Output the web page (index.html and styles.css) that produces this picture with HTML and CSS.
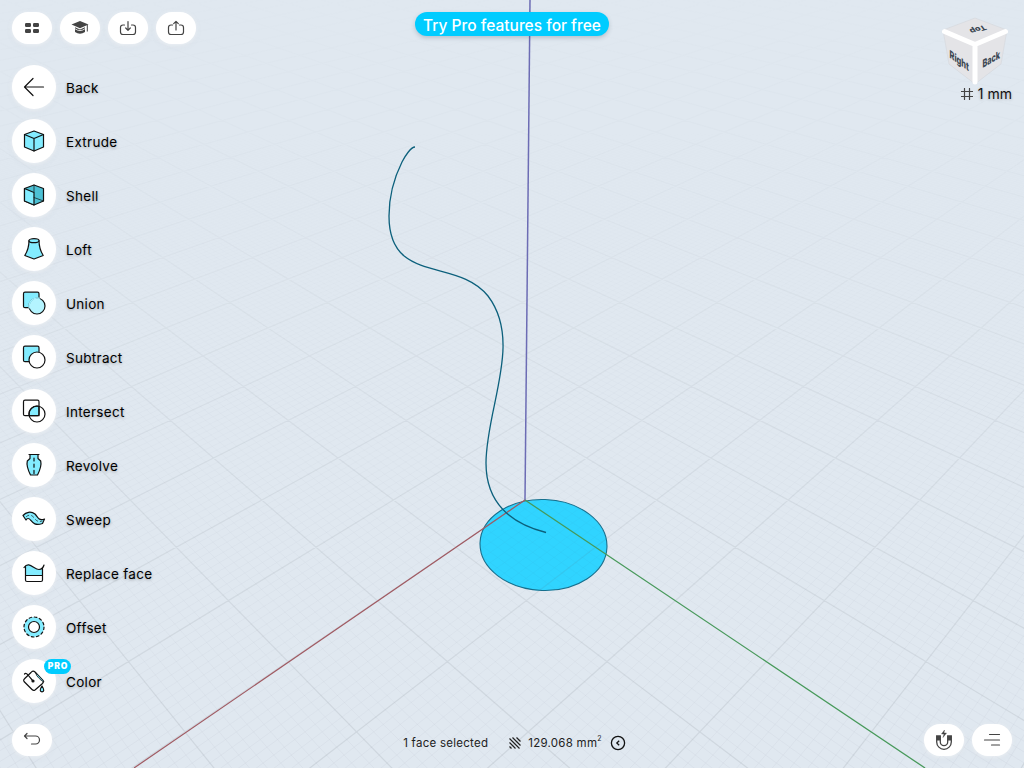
FILE: index.html
```html
<!DOCTYPE html>
<html lang="en">
<head>
  <meta charset="utf-8">
  <title>Sketch</title>
  <link rel="stylesheet" href="styles.css">
</head>
<body>
  <div class="app">
    <!-- 3D viewport -->
    <svg class="scene" viewBox="0 0 1024 768">
      <defs>
        <linearGradient id="fadeMajor" gradientUnits="userSpaceOnUse" x1="0" y1="0" x2="0" y2="768">
          <stop offset="0" stop-color="#fff" stop-opacity="0.04"/>
          <stop offset="0.3" stop-color="#fff" stop-opacity="0.25"/>
          <stop offset="0.6" stop-color="#fff" stop-opacity="0.7"/>
          <stop offset="1" stop-color="#fff" stop-opacity="1"/>
        </linearGradient>
        <linearGradient id="fadeMinor" gradientUnits="userSpaceOnUse" x1="0" y1="0" x2="0" y2="768">
          <stop offset="0.15" stop-color="#fff" stop-opacity="0"/>
          <stop offset="0.5" stop-color="#fff" stop-opacity="0.45"/>
          <stop offset="1" stop-color="#fff" stop-opacity="1"/>
        </linearGradient>
        <mask id="maskMajor" maskUnits="userSpaceOnUse" x="0" y="0" width="1024" height="768"><rect width="1024" height="768" fill="url(#fadeMajor)"/></mask>
        <mask id="maskMinor" maskUnits="userSpaceOnUse" x="0" y="0" width="1024" height="768"><rect width="1024" height="768" fill="url(#fadeMinor)"/></mask>
      </defs>
      <g transform="rotate(2 543.5 545)"><ellipse class="face" cx="543.5" cy="545" rx="63.5" ry="45.5"/></g>
      <g mask="url(#maskMinor)"><path id="gridMinor" class="grid-minor"/></g>
      <g mask="url(#maskMajor)"><path id="gridMajor" class="grid-major"/></g>
      <path class="axis axis-z" d="M525 500L530 0"/>
      <path class="axis axis-x" d="M525 500L134 768"/>
      <path class="axis axis-y" d="M525 500L925 768"/>
      <path class="curve" d="M415 147C411 147 405 156 402 162C394 178 389 198 389 216C389 285 457 257 488 296C523 342 486 408 486 463C486 502 509 523 546 532.500"/>
    </svg>

    <div class="topbar">
      <div class="button-row">
        <button class="pill-btn"><svg width="20" height="20" viewBox="0 0 20 20" fill="#444"><rect x="3" y="5" width="6" height="4" rx="1.2"/><rect x="11" y="5" width="6" height="4" rx="1.2"/><rect x="3" y="11" width="6" height="4" rx="1.2"/><rect x="11" y="11" width="6" height="4" rx="1.2"/></svg></button>
        <button class="pill-btn"><svg width="20" height="20" viewBox="0 0 20 20" fill="#444"><path d="M10 3L18.500 6.500L10 10.200L1.500 6.500ZM5 9.300L10 11.500L15 9.300V14Q10 17.500 5 14Z"/><path d="M5 10.700Q10 14.500 15 10.700" fill="none" stroke="#fff" stroke-width=".8"/><path d="M17.300 7V13.500" stroke="#444"/></svg></button>
        <button class="pill-btn"><svg class="line" width="20" height="20" viewBox="0 0 20 20"><path d="M6.500 7H5Q2.500 7 2.500 9.500V14Q2.500 16.500 5 16.500H15Q17.500 16.500 17.500 14V9.500Q17.500 7 15 7H13.500M10 3.500V12M7.700 10L10 12.300L12.300 10"/></svg></button>
        <button class="pill-btn"><svg class="line" width="20" height="20" viewBox="0 0 20 20"><path d="M6.500 7H5Q2.500 7 2.500 9.500V14Q2.500 16.500 5 16.500H15Q17.500 16.500 17.500 14V9.500Q17.500 7 15 7H13.500M10 12V3.500M7.700 5.700L10 3.400L12.300 5.700"/></svg></button>
      </div>
      <button class="promo">Try Pro features for free</button>
      <div class="view">
        <svg class="cube" width="70" height="70" viewBox="940 16 70 70">
          <path d="M975 18L943 30L949 64L975 84L1001 64L1007 30Z" fill="#e4e4e7" stroke="#d3d7dc" stroke-width=".6"/>
          <path class="cube-edge" d="M944.500 31.500L975 44.500L1005.500 31.500M975 44.500V82"/>
          <text class="cube-text" transform="matrix(.88 .62 0 1.15 949.500 57.500)" textLength="22" lengthAdjust="spacingAndGlyphs">Right</text>
          <text class="cube-text" transform="matrix(.88 -.5 0 1.15 982.500 68)" textLength="20" lengthAdjust="spacingAndGlyphs">Back</text>
          <text class="cube-text" transform="matrix(-.95 .28 -.5 -.65 984 25)" textLength="16" lengthAdjust="spacingAndGlyphs">Top</text>
        </svg>
        <div class="grid-size">
          <svg class="line" width="12" height="12" viewBox="0 0 12 12"><path d="M3.500 .5V11.500M8.500 .5V11.500M.5 3.500H11.500M.5 8.500H11.500"/></svg>
          <span>1 mm</span>
        </div>
      </div>
    </div>

    <ul class="tools">
      <li class="tool"><span class="tool-icon"><svg width="24" height="24" viewBox="0 0 24 24"><path d="M21.500 12H2.500M11 3.500L2.500 12L11 20.500"/></svg></span><span>Back</span></li>
      <li class="tool"><span class="tool-icon"><svg width="24" height="24" viewBox="0 0 24 24"><path class="fill" d="M12 2L21.500 5.500V18L12 22L2.500 18V5.500Z"/><path d="M2.500 5.500L12 9.500L21.500 5.500M12 9.500V22"/></svg></span><span>Extrude</span></li>
      <li class="tool"><span class="tool-icon"><svg width="24" height="24" viewBox="0 0 24 24"><path class="dark" d="M12 2L21.500 5.500V18L12 22L2.500 18V5.500Z"/><path class="fill" d="M2.500 5.500L12 9.500V22L2.500 18Z"/><path class="thin" d="M12 2V9M12 14.500L21.500 18"/></svg></span><span>Shell</span></li>
      <li class="tool"><span class="tool-icon"><svg width="24" height="24" viewBox="0 0 24 24"><path class="fill" d="M7 3.500C7 11 5 15 2.800 18.500L12 22L21.200 18.500C19 15 17 11 17 3.500"/><ellipse class="fill" cx="12" cy="3.700" rx="5" ry="2"/></svg></span><span>Loft</span></li>
      <li class="tool"><span class="tool-icon"><svg width="24" height="24" viewBox="0 0 24 24"><rect class="fill" x="1.500" y="1.200" width="15.500" height="15.500" rx="1.500"/><circle class="light" cx="15" cy="15" r="8"/><path d="M17 7.300A8 8 0 0 0 7.300 16.700" stroke="#9ff0ff" stroke-width="1.600"/></svg></span><span>Union</span></li>
      <li class="tool"><span class="tool-icon"><svg width="24" height="24" viewBox="0 0 24 24"><rect class="fill" x="1.500" y="1.200" width="15.500" height="15.500" rx="1.500"/><circle class="white" cx="15" cy="15" r="8"/></svg></span><span>Subtract</span></li>
      <li class="tool"><span class="tool-icon"><svg width="24" height="24" viewBox="0 0 24 24"><path class="fill" d="M17 7.300V16.700H7.300C6 11 11 6 17 7.300Z"/><rect x="1.500" y="1.200" width="15.500" height="15.500" rx="1.500"/><circle cx="15" cy="15" r="8"/></svg></span><span>Intersect</span></li>
      <li class="tool"><span class="tool-icon"><svg width="24" height="24" viewBox="0 0 24 24"><path class="fill" d="M7 1.500H17M8 1.500V5.500L5.300 8C4.300 12 6 17 8.500 22H15.500C18 17 19.700 12 18.700 8L16 5.500V1.500"/><path d="M12 5V21" stroke-dasharray="3 3.2"/></svg></span><span>Revolve</span></li>
      <li class="tool"><span class="tool-icon"><svg width="24" height="24" viewBox="0 0 24 24"><path class="fill" d="M1 8.500C4 5 9 4 13 7C16 10 16 14 22.500 12L20.500 16.500C13 19 11 16 8.500 13C7 11 5 11 4 13Z"/><path class="thin" d="M4.500 9.500C8 6.500 11 9 13 12C15 14.500 17 15 20 14" stroke-dasharray="2.5 3"/></svg></span><span>Sweep</span></li>
      <li class="tool"><span class="tool-icon"><svg width="24" height="24" viewBox="0 0 24 24"><path class="fill" d="M3.500 14.500V5C8 .5 12 8.500 17 8.500Q19 8.500 20.500 7.500V14.500Z" stroke="none"/><path d="M3.500 5V19Q3.500 20.500 5 20.500H19Q20.500 20.500 20.500 19V7.500M3.500 14.500H20.500M2 6.500C7 -.5 12 8.500 17 8.500Q21 8 22 4"/></svg></span><span>Replace face</span></li>
      <li class="tool"><span class="tool-icon"><svg width="24" height="24" viewBox="0 0 24 24"><circle class="fill" cx="12" cy="12" r="10" stroke-dasharray="2.6 2.636"/><circle class="white" cx="12" cy="12" r="5.500"/></svg></span><span>Offset</span></li>
      <li class="tool"><span class="tool-icon"><svg width="24" height="24" viewBox="0 0 24 24"><path d="M9 3.500Q11 1 13 3L21 11.500Q22 13 20.500 14.500L13 21Q11.500 22 10 20.500L2 12.500Q1 11 2.500 9.700Z"/><path class="fill" d="M14 4L22 12.500Q20 13 15 7Z" stroke-width=".8"/><path d="M2.500 5Q4 3.500 6 6L11 12"/><circle cx="11" cy="12" r="1" fill="#111"/><path class="fill" d="M20 17Q16.500 22.500 20 22.800Q23.500 22.500 20 17Z"/></svg><b class="badge">PRO</b></span><span>Color</span></li>
    </ul>

    <div class="bottombar">
      <button class="pill-btn"><svg class="line" width="20" height="20" viewBox="0 0 20 20"><path d="M5 3.500L2.500 6L5 8.500M2.500 6H13.500A4 4 0 0 1 13.500 14H9.500"/></svg></button>
      <div class="status">
        <span class="selected">1 face selected</span>
        <svg class="hatch" width="12" height="12" viewBox="0 0 12 12"><path d="M.5 9.500L2.500 11.500M.5 5.500L6.500 11.500M.5 1.500L10.500 11.500M3.500 .5L11.500 8.500M7.500 .5L11.500 4.500"/></svg>
        <span class="area">129.068 mm<sup>2</sup></span>
        <svg class="collapse" width="16" height="16" viewBox="0 0 16 16"><circle cx="8" cy="8" r="6.600"/><path d="M9.200 5.700L6.800 8L9.200 10.300"/></svg>
      </div>
      <div class="button-row">
        <button class="pill-btn"><svg width="20" height="24" viewBox="0 0 20 24" fill="none" stroke="#444"><path d="M2.700 8V14A7.300 7.300 0 0 0 17.300 14V8H13.700V14A3.700 3.700 0 0 1 6.300 14V8Z" stroke-width="1.300"/><path d="M4.500 8V12.500M15.500 8V12.500" stroke-width="3.600"/><path d="M10.500 2L7.500 6H10L9 9.500L12.500 5H10Z" fill="#444" stroke-width=".4"/></svg></button>
        <button class="pill-btn"><svg class="line" width="20" height="20" viewBox="0 0 20 20"><path d="M7.500 4.500H17.500M2.500 10H17.500M9.500 15H17.500"/></svg></button>
      </div>
    </div>
  </div>
  <script src="grid.js"></script>
</body>
</html>
```

FILE: styles.css
```css
* {
  box-sizing: border-box;
}
body {
  margin: 0;
  font-family: Inter, "Liberation Sans", sans-serif;
  color: #111;
}
.app {
  position: relative;
  width: 1024px;
  height: 768px;
  padding: 12px;
  overflow: hidden;
  background-color: #e0e8f0;
  display: flex;
  flex-direction: column;
}
.scene {
  position: absolute;
  top: 0;
  left: 0;
  width: 1024px;
  height: 768px;
}
.grid-major, .grid-minor {
  fill: none;
  stroke: #5a6470;
  stroke-width: 1.2;
  stroke-opacity: 0.13;
}
.grid-minor {
  stroke-width: 1;
  stroke-opacity: 0.045;
}
.face {
  fill: #30d4ff;
  stroke: #17708e;
  stroke-width: 1.1;
}
.axis {
  fill: none;
  stroke-width: 1.2;
}
.axis-x {
  stroke: #a05a62;
}
.axis-y {
  stroke: #459a58;
}
.axis-z {
  stroke: #6c6cb4;
  stroke-width: 1.5;
}
.curve {
  fill: none;
  stroke: #0c607c;
  stroke-width: 1.3;
}
.topbar, .tools, .bottombar {
  position: relative;
}
.topbar {
  display: grid;
  grid-template-columns: 1fr auto 1fr;
  align-items: start;
  height: 53px;
}
.button-row {
  display: flex;
  gap: 8px;
}
.pill-btn {
  display: flex;
  align-items: center;
  justify-content: center;
  width: 40px;
  height: 32px;
  padding: 0;
  border: none;
  border-radius: 16px;
  background-color: #fff;
  box-shadow: 0 1px 5px rgba(255, 255, 255, 0.7), 0 2px 6px rgba(100, 120, 150, 0.1);
}
.line {
  fill: none;
  stroke: #444;
  stroke-width: 1.2;
  stroke-linecap: round;
  stroke-linejoin: round;
}
.promo {
  width: 194px;
  height: 24px;
  padding: 3px 0 0;
  border: none;
  border-radius: 12px;
  background-color: #0cf;
  color: #fff;
  font: 500 15.5px/21px Inter, sans-serif;
  white-space: nowrap;
  box-shadow: 0 2px 4px rgba(60, 80, 100, 0.25);
}
.view {
  display: flex;
  flex-direction: column;
  align-items: flex-end;
}
.cube {
  margin: 4px 2px 0 0;
}
.cube-edge {
  fill: none;
  stroke: #fff;
  stroke-width: 5;
  stroke-linecap: round;
  stroke-linejoin: round;
}
.cube-text {
  font-size: 9.5px;
  font-weight: 800;
  fill: #3c4752;
}
.grid-size {
  display: flex;
  align-items: center;
  gap: 5px;
  line-height: 16px;
  font-size: 14px;
  font-weight: 400;
  text-shadow: 0 1px 3px rgba(0, 0, 0, 0.25);
}
.tools {
  display: flex;
  flex-direction: column;
  gap: 10px;
  margin: 0;
  padding: 0;
  list-style: none;
}
.tool {
  display: flex;
  align-items: center;
  gap: 10px;
  height: 44px;
  font-size: 13.5px;
  line-height: 17px;
  font-weight: 400;
  letter-spacing: 0.3px;
  color: #000;
  text-shadow: 0 1px 3px rgba(0, 0, 0, 0.3);
}
.tool > span:last-child {
  padding-top: 2px;
}
.tool-icon {
  position: relative;
  display: flex;
  align-items: center;
  justify-content: center;
  width: 44px;
  height: 44px;
  border-radius: 50%;
  background-color: #fff;
  box-shadow: 0 1px 5px rgba(255, 255, 255, 0.7), 0 2px 6px rgba(100, 120, 150, 0.1);
}
.tool-icon svg {
  fill: none;
  stroke: #111;
  stroke-width: 1.2;
  stroke-linecap: round;
  stroke-linejoin: round;
}
.tool-icon .fill {
  fill: #83ecff;
}
.tool-icon .dark {
  fill: #4cc0d4;
}
.tool-icon .light {
  fill: #b4f4ff;
}
.tool-icon .white {
  fill: #fff;
}
.tool-icon .thin {
  stroke-width: 0.7;
}
.badge {
  position: absolute;
  top: 0;
  left: 32px;
  width: 27px;
  height: 15px;
  border-radius: 7.5px;
  background-color: #0cf;
  color: #fff;
  font-size: 8.5px;
  font-weight: 900;
  line-height: 15px;
  letter-spacing: 0.9px;
  text-indent: 0.9px;
  text-align: center;
  text-shadow: none;
}
.bottombar {
  display: grid;
  grid-template-columns: 1fr auto 1fr;
  align-items: center;
  margin-top: auto;
}
.bottombar > .button-row {
  justify-content: flex-end;
}
.status {
  display: flex;
  align-items: center;
  height: 16px;
  margin: 5px 0 0 5px;
  font-size: 11.5px;
  letter-spacing: 0.26px;
  color: #222;
}
.hatch {
  margin: 0 7px 0 21px;
  stroke: #222;
  stroke-width: 1.2;
}
.area sup {
  font-size: 7px;
  line-height: 0;
  vertical-align: 6px;
}
.collapse {
  margin-left: 8px;
  fill: none;
  stroke: #111;
  stroke-width: 1.3;
}
```

FILE: grid.js
```js
// ground plane grid in perspective, u runs along the red axis, v along the green one
function project(u, v) {
  const k = u + v;
  const w = 1 - 0.0583 * k;
  return [(525 - 30 * k + 65.8 * (v - u)) / w, (500 + 15.3 * k) / w];
}

function lines(step, range) {
  let d = '';
  const count = Math.round(range / step);
  for (let n = -count; n <= count; n++) {
    const a = n * step;
    if (step < 1 && n % 10 === 0) continue;
    // stop before the point where the line passes behind the camera
    const end = 12 - a;
    const p = project(a, -60), q = project(a, end);
    const r = project(-60, a), s = project(end, a);
    d += `M${p[0].toFixed(1)} ${p[1].toFixed(1)}L${q[0].toFixed(1)} ${q[1].toFixed(1)}`;
    d += `M${r[0].toFixed(1)} ${r[1].toFixed(1)}L${s[0].toFixed(1)} ${s[1].toFixed(1)}`;
  }
  return d;
}

document.getElementById('gridMajor').setAttribute('d', lines(1, 30));
document.getElementById('gridMinor').setAttribute('d', lines(0.1, 20));
```
